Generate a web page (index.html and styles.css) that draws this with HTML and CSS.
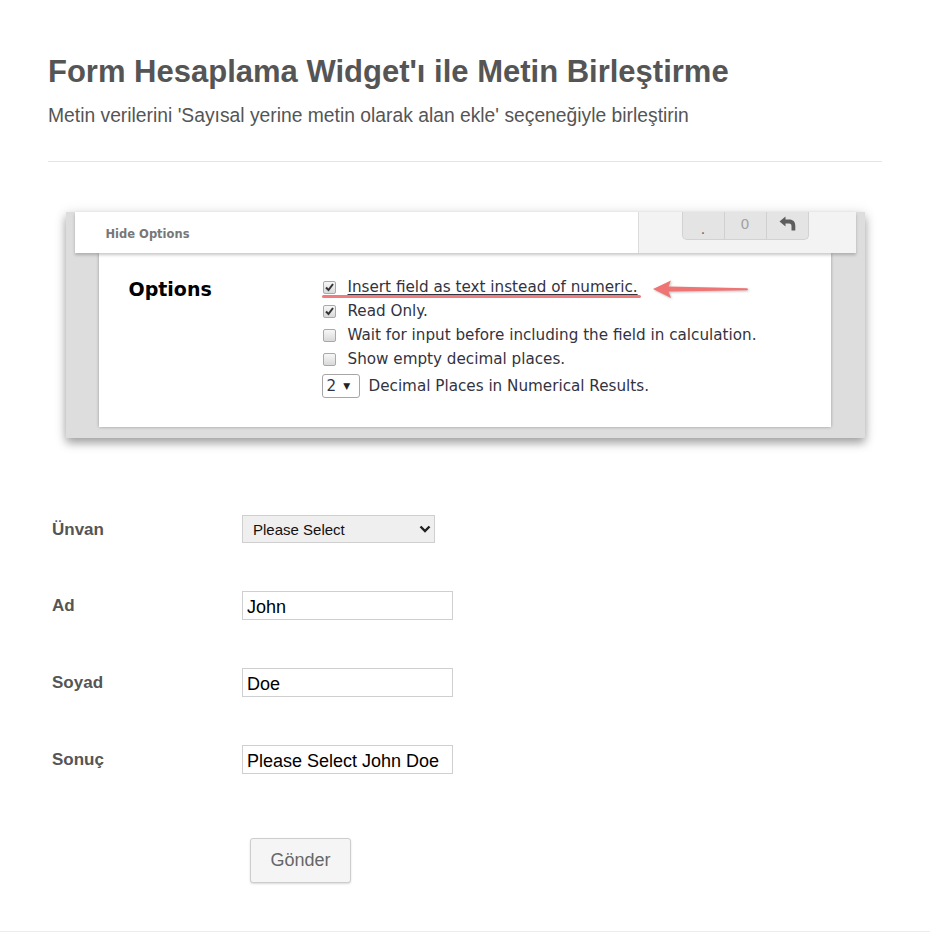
FILE: index.html
```html
<!DOCTYPE html>
<html lang="tr">
<head>
    <meta charset="UTF-8">
    <meta name="viewport" content="width=device-width, initial-scale=1.0">
    <title>Form Hesaplama Widget'ı ile Metin Birleştirme</title>
    <link rel="stylesheet" href="styles.css">
</head>
<body>
    <div class="page">
        <h1 class="title">Form Hesaplama Widget'ı ile Metin Birleştirme</h1>
        <p class="subtitle">Metin verilerini 'Sayısal yerine metin olarak alan ekle' seçeneğiyle birleştirin</p>
        <hr class="divider">

        <!-- screenshot of the widget settings -->
        <div class="shot">
            <div class="shot-bar">
                <div class="shot-toggle">Hide Options</div>
                <div class="shot-tools">
                    <div class="keypad">
                        <span class="key key-dot">.</span>
                        <span class="key key-zero">0</span>
                        <span class="key key-undo">
                            <svg width="17" height="15" viewBox="0 0 17 15">
                                <path d="M6.5 0.5 L0.5 5.5 L6.5 10.5 V7.5 H10 C11.8 7.5 12.5 8.6 12.5 10.2 V14.5 H16.3 V9.8 C16.3 5.8 14 3.6 10.2 3.6 H6.5 Z" fill="#5d5d5d"/>
                            </svg>
                        </span>
                    </div>
                </div>
            </div>
            <div class="shot-body">
                <div class="opt-title">Options</div>
                <ul class="opt-list">
                    <li class="opt-row opt-marked">
                        <span class="cb"><svg width="11" height="11" viewBox="0 0 11 11"><path d="M2 5.5 L4.5 8 L9 2" fill="none" stroke="#333" stroke-width="2"/></svg></span>
                        <span class="opt-text opt-link">Insert field as text instead of numeric.</span>
                        <span class="marker-line"></span>
                    </li>
                    <li class="opt-row">
                        <span class="cb"><svg width="11" height="11" viewBox="0 0 11 11"><path d="M2 5.5 L4.5 8 L9 2" fill="none" stroke="#333" stroke-width="2"/></svg></span>
                        <span class="opt-text">Read Only.</span>
                    </li>
                    <li class="opt-row">
                        <span class="cb"></span>
                        <span class="opt-text">Wait for input before including the field in calculation.</span>
                    </li>
                    <li class="opt-row">
                        <span class="cb"></span>
                        <span class="opt-text">Show empty decimal places.</span>
                    </li>
                    <li class="opt-row opt-decimals">
                        <span class="mini-select">2 <span class="mini-caret">▼</span></span>
                        <span class="opt-text">Decimal Places in Numerical Results.</span>
                    </li>
                </ul>
                <svg class="pointer-arrow" width="98" height="22" viewBox="0 0 98 22">
                    <path d="M1 10 L19 1.5 L16.5 7.6 L95 9.3 Q97 10.2 95 11.2 L16.5 12.6 L19 19 Z" fill="#ef7474"/>
                </svg>
            </div>
        </div>

        <form class="demo-form">
            <div class="form-row">
                <label class="form-label">Ünvan</label>
                <div class="select-box">
                    <span>Please Select</span>
                    <svg width="12" height="8" viewBox="0 0 12 8"><path d="M1.5 1.5 L6 6 L10.5 1.5" fill="none" stroke="#222" stroke-width="2.4"/></svg>
                </div>
            </div>
            <div class="form-row">
                <label class="form-label" for="ad">Ad</label>
                <input class="form-input" type="text" id="ad" value="John">
            </div>
            <div class="form-row">
                <label class="form-label" for="soyad">Soyad</label>
                <input class="form-input" type="text" id="soyad" value="Doe">
            </div>
            <div class="form-row">
                <label class="form-label" for="sonuc">Sonuç</label>
                <input class="form-input" type="text" id="sonuc" value="Please Select John Doe">
            </div>
            <div class="form-actions">
                <button type="button" class="submit-button">Gönder</button>
            </div>
        </form>
    </div>
</body>
</html>
```

FILE: styles.css
```css
body {
    margin: 0;
    background-color: #fff;
    font-family: 'Liberation Sans', Arial, sans-serif;
    color: #555;
}
.page {
    padding: 53px 48px 48px;
    border-bottom: 1px solid #ececec;
}
.title {
    margin: 0;
    font-size: 31px;
    line-height: 37px;
    font-weight: bold;
    color: #555;
}
.subtitle {
    margin: 15px 0 0;
    font-size: 19.3px;
    line-height: 22px;
    color: #555;
}
.divider {
    margin: 34px 0 0;
    border: none;
    border-top: 1px solid #e4e4e4;
}

/* widget screenshot */
.shot {
    position: relative;
    width: 799px;
    margin: 50px auto 0;
    padding: 0 0 11px;
    background-color: #dddddd;
    box-shadow: 0 5px 9px rgba(0, 0, 0, 0.35), 0 0 14px rgba(0, 0, 0, 0.08);
    font-family: 'DejaVu Sans', Verdana, sans-serif;
}
.shot-bar {
    display: flex;
    height: 41px;
    margin: 0 9px;
    background-color: #fff;
    box-shadow: 0 2px 3px rgba(0, 0, 0, 0.22);
    position: relative;
    z-index: 1;
}
.shot-toggle {
    flex: 1;
    padding: 2px 0 0 31px;
    line-height: 41px;
    font-size: 11.5px;
    font-weight: bold;
    color: #777;
}
.shot-tools {
    width: 174px;
    padding-left: 43px;
    background-color: #f3f3f3;
    border-left: 1px solid #dcdcdc;
}
.keypad {
    display: flex;
    width: 127px;
    height: 28px;
    background-color: #e4e4e4;
    border: 1px solid #d2d2d2;
    border-top: none;
    border-radius: 0 0 5px 5px;
    box-sizing: border-box;
}
.key {
    flex: 1;
    display: flex;
    justify-content: center;
    align-items: center;
    font-size: 14px;
    color: #666;
    border-left: 1px solid #d0d0d0;
}
.key:first-child {
    border-left: none;
}
.key-dot {
    padding-top: 6px;
}
.key-zero {
    padding-bottom: 4px;
    color: #a2a2a2;
}
.key-undo {
    padding-bottom: 5px;
}
.shot-body {
    position: relative;
    display: flex;
    height: 174px;
    margin: 0 34px 0 33px;
    padding: 22px 0 0 30px;
    box-sizing: border-box;
    background-color: #fff;
    box-shadow: 0 0 3px rgba(0, 0, 0, 0.3);
}
.opt-title {
    width: 193px;
    padding-top: 2px;
    font-size: 19px;
    line-height: 24px;
    font-weight: bold;
    color: #000;
}
.opt-list {
    margin: 0;
    padding: 0;
    list-style: none;
}
.opt-row {
    position: relative;
    display: flex;
    align-items: center;
    height: 24px;
    font-size: 15.2px;
    color: #33333f;
}
.cb {
    width: 13px;
    height: 13px;
    margin: 0 12px 0 1px;
    display: flex;
    justify-content: center;
    align-items: center;
    border: 1px solid #a9a9a9;
    border-radius: 2px;
    background: linear-gradient(#f7f7f7, #d9d9d9);
    box-sizing: border-box;
}
.cb svg {
    flex: none;
}
.opt-link {
    text-decoration: underline;
    text-underline-offset: 2px;
}
.marker-line {
    position: absolute;
    left: 0;
    top: 20px;
    width: 319px;
    height: 3px;
    border-radius: 2px;
    background-color: #ef7d7d;
}
.opt-decimals {
    margin-top: 3px;
}
.mini-select {
    display: flex;
    align-items: center;
    gap: 7px;
    width: 38px;
    height: 24px;
    margin-right: 9px;
    padding-left: 4px;
    box-sizing: border-box;
    border: 1px solid #a6a6a6;
    border-radius: 3px;
    background-color: #fff;
}
.mini-caret {
    font-size: 9px;
    color: #222;
}
.pointer-arrow {
    position: absolute;
    left: 553px;
    top: 26px;
    filter: drop-shadow(1px 1px 1px rgba(0, 0, 0, 0.25));
}

/* demo form */
.demo-form {
    margin-top: 77px;
    padding-left: 4px;
}
.form-row {
    display: flex;
    align-items: center;
    margin-bottom: 48px;
}
.form-label {
    width: 190px;
    padding-top: 1px;
    font-size: 17px;
    font-weight: bold;
    color: #555;
}
.select-box {
    display: flex;
    justify-content: space-between;
    align-items: center;
    width: 193px;
    height: 28px;
    padding: 0 3px 0 10px;
    box-sizing: border-box;
    border: 1px solid #cfcfcf;
    background-color: #efefef;
    font-size: 15px;
    color: #111;
}
.form-input {
    width: 211px;
    height: 29px;
    margin: 0;
    padding: 3px 4px 0;
    box-sizing: border-box;
    border: 1px solid #cfcfcf;
    font-family: 'Liberation Sans', Arial, sans-serif;
    font-size: 18px;
    color: #000;
    outline: none;
}
.form-actions {
    padding: 16px 0 0 198px;
}
.submit-button {
    width: 101px;
    height: 45px;
    border: 1px solid #cdcdcd;
    border-radius: 3px;
    background-color: #f5f5f5;
    box-shadow: 0 1px 2px rgba(0, 0, 0, 0.15);
    font-family: 'Liberation Sans', Arial, sans-serif;
    font-size: 18px;
    color: #666;
    cursor: pointer;
}
```
